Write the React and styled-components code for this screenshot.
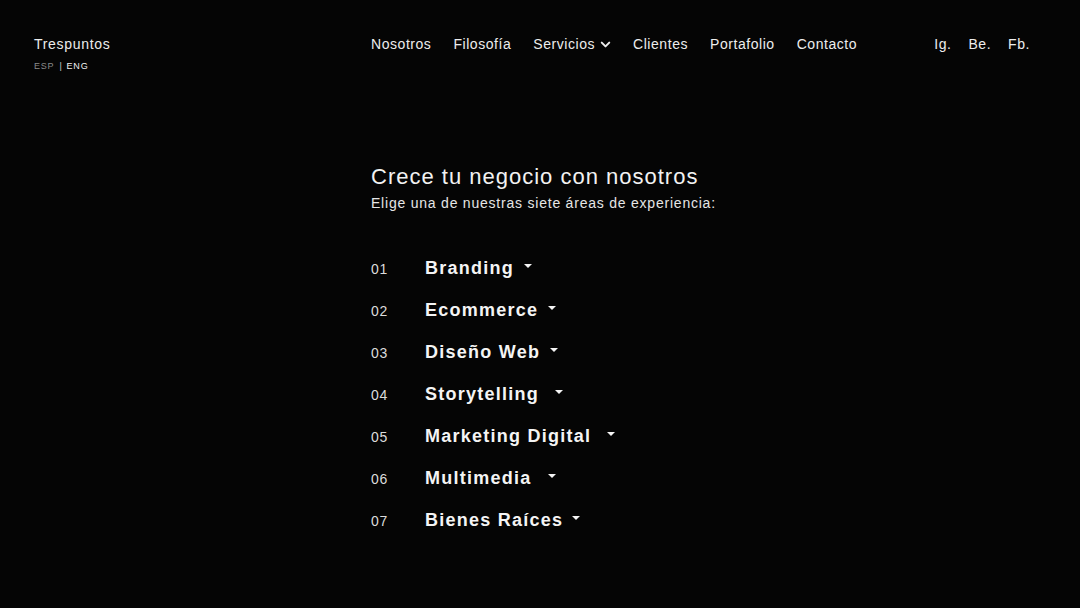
import React from 'react';
import styled, { createGlobalStyle } from 'styled-components';
import { ChevronDown } from 'lucide-react';

const GlobalStyle = createGlobalStyle`
  html, body {
    margin: 0;
    padding: 0;
    background: #050505;
    color: #fff;
    font-family: "Liberation Sans", Arial, sans-serif;
  }
`;

const areas = [
  { n: '01', name: 'Branding', gap: 10 },
  { n: '02', name: 'Ecommerce', gap: 10 },
  { n: '03', name: 'Diseño Web', gap: 10 },
  { n: '04', name: 'Storytelling', gap: 16 },
  { n: '05', name: 'Marketing Digital', gap: 16 },
  { n: '06', name: 'Multimedia', gap: 16 },
  { n: '07', name: 'Bienes Raíces', gap: 9 },
];

const App = () => {
  return (
    <Page>
      <GlobalStyle />
      <Header>
        <Brand>
          <Logo>Trespuntos</Logo>
          <Lang>
            <LangItem>ESP</LangItem>
            <Sep>|</Sep>
            <LangItem active>ENG</LangItem>
          </Lang>
        </Brand>
        <Nav>
          <NavLink>Nosotros</NavLink>
          <NavLink>Filosofía</NavLink>
          <NavLink>
            Servicios
            <ChevronDown size={15} strokeWidth={3.2} className="chev" />
          </NavLink>
          <NavLink>Clientes</NavLink>
          <NavLink>Portafolio</NavLink>
          <NavLink>Contacto</NavLink>
        </Nav>
        <Social>
          <NavLink>Ig.</NavLink>
          <NavLink>Be.</NavLink>
          <NavLink>Fb.</NavLink>
        </Social>
      </Header>

      <Main>
        <Title>Crece tu negocio con nosotros</Title>
        <Subtitle>Elige una de nuestras siete áreas de experiencia:</Subtitle>
        <List>
          {areas.map((a) => (
            <Row key={a.n}>
              <Num>{a.n}</Num>
              <Area>
                {a.name}
                <Caret gap={a.gap} />
              </Area>
            </Row>
          ))}
        </List>
      </Main>
    </Page>
  );
};

export default App;

const Page = styled.div`
  width: 1080px;
  height: 608px;
  box-sizing: border-box;
  padding: 36px 50px 0 34px;
  background: #050505;
  overflow: hidden;
`;

const Header = styled.header`
  display: flex;
  align-items: flex-start;
`;

const Brand = styled.div`
  width: 337px;
  display: flex;
  flex-direction: column;
`;

const Logo = styled.div`
  font-size: 14px;
  letter-spacing: 0.7px;
  line-height: 16px;
  color: #ececec;
`;

const Lang = styled.div`
  display: flex;
  align-items: center;
  margin-top: 9px;
  font-size: 9px;
  letter-spacing: 0.8px;
  line-height: 10px;
`;

const LangItem = styled.span`
  color: ${(p) => (p.active ? '#f2f2f2' : '#8a8a8a')};
`;

const Sep = styled.span`
  color: #cfcfcf;
  margin: 0 4px 0 5px;
`;

const Nav = styled.nav`
  display: flex;
  gap: 22px;
`;

const NavLink = styled.a`
  display: flex;
  align-items: center;
  font-size: 14px;
  letter-spacing: 0.55px;
  line-height: 16px;
  color: #ededed;
  cursor: pointer;

  .chev {
    margin-left: 3px;
    margin-right: -2px;
    margin-top: 1px;
  }
`;

const Social = styled.div`
  margin-left: auto;
  display: flex;
  gap: 17px;
`;

const Main = styled.main`
  margin-left: 337px;
  margin-top: 93px;
`;

const Title = styled.h1`
  margin: 0;
  font-weight: 400;
  font-size: 22px;
  letter-spacing: 1px;
  line-height: 26px;
  color: #f2f2f2;
`;

const Subtitle = styled.p`
  margin: 5px 0 0;
  font-size: 14px;
  letter-spacing: 0.78px;
  line-height: 17px;
  color: #e6e6e6;
`;

const List = styled.ul`
  list-style: none;
  margin: 45px 0 0;
  padding: 0;
  display: flex;
  flex-direction: column;
  gap: 20px;
`;

const Row = styled.li`
  display: flex;
  align-items: center;
  height: 22px;
`;

const Num = styled.span`
  width: 54px;
  font-size: 14px;
  letter-spacing: 0.6px;
  color: #dcdcdc;
  padding-top: 2px;
`;

const Area = styled.span`
  display: flex;
  align-items: center;
  font-size: 18px;
  font-weight: 700;
  letter-spacing: 1.25px;
  color: #f4f4f4;
`;

const Caret = styled.span`
  display: inline-block;
  width: 0;
  height: 0;
  margin-left: ${(p) => p.gap}px;
  margin-bottom: 5px;
  border-left: 4px solid transparent;
  border-right: 4px solid transparent;
  border-top: 4px solid #f4f4f4;
`;
